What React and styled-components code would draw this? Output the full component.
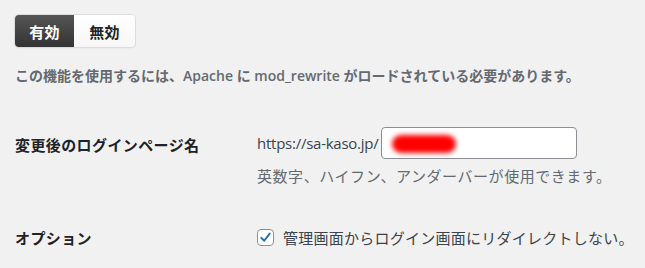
import React from "react"
import styled, { createGlobalStyle } from "styled-components"

const Global = createGlobalStyle`
  html, body {
    margin: 0;
    background: #f1f1f1;
    font-family: "Open Sans", "Noto Sans CJK JP", sans-serif;
    color: #1d2327;
  }
`

const Page = styled.div`
  padding: 15px 0 0 15px;
`

const Toggle = styled.div`
  display: inline-flex;
  border-radius: 4px;
  box-shadow: 0 0 0 1px #dcdcdc, 0 1px 2px rgba(0, 0, 0, 0.08);
  overflow: hidden;
`

const ToggleButton = styled.button`
  height: 32px;
  width: ${p => p.$w}px;
  border: 0;
  padding: 0;
  font-family: "Noto Sans CJK JP", sans-serif;
  font-weight: 700;
  font-size: 15px;
  letter-spacing: 0.3px;
  color: ${p => (p.$active ? "#fff" : "#222")};
  background: ${p =>
    p.$active
      ? "linear-gradient(#555, #333)"
      : "linear-gradient(#fff, #f7f7f7)"};
`

const Notice = styled.p`
  margin: 18px 0 0;
  font-size: 14px;
  font-weight: 600;
  color: #646970;
`

const Table = styled.div`
  margin-top: 42px;
  display: grid;
  grid-template-columns: 242px 1fr;
  row-gap: 41px;
`

const Label = styled.div`
  font-family: "Noto Sans CJK JP", sans-serif;
  font-size: 15px;
  font-weight: 700;
  letter-spacing: 0.4px;
  color: #1d2327;
  padding-top: ${p => p.$top || 0}px;
`

const Field = styled.div`
  display: flex;
  flex-direction: column;
  gap: 6px;
`

const UrlRow = styled.div`
  display: flex;
  align-items: center;
  font-size: 15px;
  letter-spacing: -0.25px;
  color: #3c434a;
`

const InputBox = styled.div`
  position: relative;
  width: 196px;
  height: 32px;
  box-sizing: border-box;
  border: 1px solid #8c8f94;
  border-radius: 4px;
  background: #fff;
  margin-left: 2px;
`

const Redact = styled.span`
  position: absolute;
  left: 10px;
  top: 7px;
  width: 64px;
  height: 18px;
  border-radius: 9px;
  background: #ff0000;
  filter: blur(2.5px);
`

const Help = styled.div`
  font-family: "Noto Sans CJK JP", sans-serif;
  font-size: 15px;
  letter-spacing: 0.55px;
  color: #646970;
  white-space: nowrap;
`

const CheckRow = styled.label`
  display: flex;
  align-items: center;
  gap: 9px;
  font-family: "Noto Sans CJK JP", sans-serif;
  font-size: 15px;
  letter-spacing: 0.25px;
  color: #3c434a;
  white-space: nowrap;
`

const Box = styled.span`
  flex: none;
  width: 17px;
  height: 17px;
  box-sizing: border-box;
  border: 1px solid #8c8f94;
  border-radius: 4px;
  background: #fff;
  display: flex;
  align-items: center;
  justify-content: center;
`

const App = () => (
  <Page>
    <Global />
    <Toggle>
      <ToggleButton $active $w={59}>有効</ToggleButton>
      <ToggleButton $w={61}>無効</ToggleButton>
    </Toggle>
    <Notice>この機能を使用するには、Apache に mod_rewrite がロードされている必要があります。</Notice>
    <Table>
      <Label $top={7}>変更後のログインページ名</Label>
      <Field>
        <UrlRow>
          https://sa-kaso.jp/
          <InputBox>
            <Redact />
          </InputBox>
        </UrlRow>
        <Help>英数字、ハイフン、アンダーバーが使用できます。</Help>
      </Field>
      <Label>オプション</Label>
      <CheckRow>
        <Box>
          <svg width="13" height="13" viewBox="0 0 20 20">
            <path d="M3.5 10.5 L8 15 L16.5 4" fill="none" stroke="#2271b1" strokeWidth="3" strokeLinecap="round" strokeLinejoin="round" />
          </svg>
        </Box>
        管理画面からログイン画面にリダイレクトしない。
      </CheckRow>
    </Table>
  </Page>
)

export default App
